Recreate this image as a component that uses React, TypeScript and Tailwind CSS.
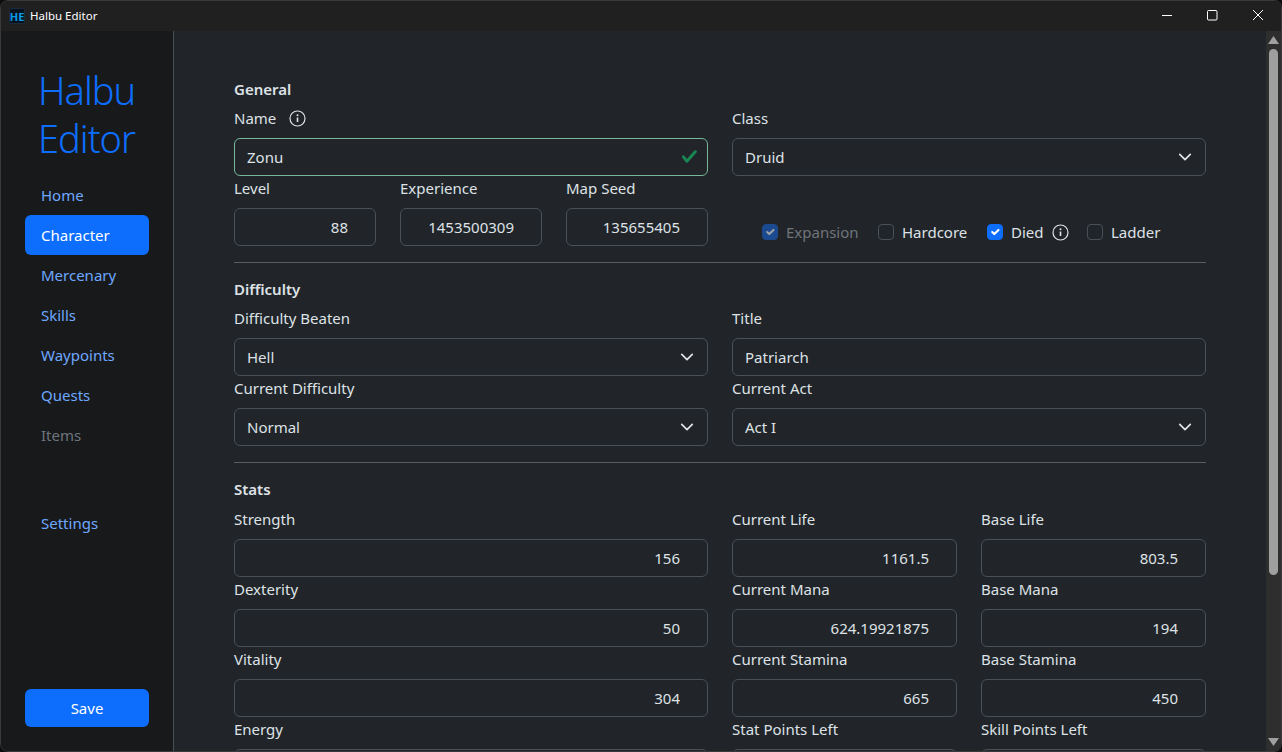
const FONT = "font-['Noto_Sans',sans-serif]";

const navItems = [
  { label: 'Home' },
  { label: 'Character', active: true },
  { label: 'Mercenary' },
  { label: 'Skills' },
  { label: 'Waypoints' },
  { label: 'Quests' },
  { label: 'Items', disabled: true },
];

const statRows = [
  ['Strength', '156', 'Current Life', '1161.5', 'Base Life', '803.5'],
  ['Dexterity', '50', 'Current Mana', '624.19921875', 'Base Mana', '194'],
  ['Vitality', '304', 'Current Stamina', '665', 'Base Stamina', '450'],
  ['Energy', '', 'Stat Points Left', '', 'Skill Points Left', ''],
];

const InfoIcon = () => (
  <svg width="17" height="17" viewBox="0 0 17 17" fill="none" stroke="#dee2e6" className="shrink-0">
    <circle cx="8.5" cy="8.5" r="7.5" strokeWidth="1.2" />
    <path d="M8.5 7.5v4.5" strokeWidth="1.6" />
    <circle cx="8.5" cy="5.2" r="1" fill="#dee2e6" stroke="none" />
  </svg>
);

const Chevron = () => (
  <svg width="14" height="14" viewBox="0 0 16 16" fill="none" stroke="#dee2e6" strokeWidth="2" strokeLinecap="round" strokeLinejoin="round" className="absolute right-[14px] top-[12px] pointer-events-none">
    <path d="m2 5 6 6 6-6" />
  </svg>
);

const Label = ({ children }: { children: React.ReactNode }) => (
  <label className="flex items-center h-6 mb-2 gap-[13px]">{children}</label>
);

const TextField = ({ label, value }: { label: string; value: string }) => (
  <div>
    <Label>{label}</Label>
    <input readOnly value={value} className="w-full h-[38px] px-3 rounded-md border border-[#495057] bg-[#212529] outline-none" />
  </div>
);

const NumberField = ({ label, value }: { label: string; value: string }) => (
  <div>
    <Label>{label}</Label>
    <input readOnly value={value} className="w-full h-[38px] pl-3 pr-[27px] text-right rounded-md border border-[#495057] bg-[#212529] outline-none" />
  </div>
);

const SelectField = ({ label, value }: { label: string; value: string }) => (
  <div>
    <Label>{label}</Label>
    <div className="relative">
      <select value={value} onChange={() => {}} className="appearance-none w-full h-[38px] pl-3 pr-9 rounded-md border border-[#495057] bg-[#212529] outline-none">
        <option>{value}</option>
      </select>
      <Chevron />
    </div>
  </div>
);

const Check = ({ label, checked, disabled, info, width }: { label: string; checked?: boolean; disabled?: boolean; info?: boolean; width: string }) => (
  <div className={`flex items-center gap-2 ${width} ${disabled ? 'text-[#6f7479]' : ''}`}>
    <span className={`flex items-center justify-center w-4 h-4 rounded border ${checked ? (disabled ? 'bg-[#1b4a90] border-[#1b4a90]' : 'bg-[#0d6efd] border-[#0d6efd]') : 'border-[#495057]'}`}>
      {checked && (
        <svg width="16" height="16" viewBox="0 0 20 20" fill="none" stroke={disabled ? '#9aa0a6' : '#fff'} strokeWidth="3" strokeLinecap="round" strokeLinejoin="round">
          <path d="m6 10 3 3 6-6" />
        </svg>
      )}
    </span>
    <span>{label}</span>
    {info && <InfoIcon />}
  </div>
);

const ScrollBar = () => (
  <div className="w-[15px] shrink-0 bg-[#2e2e2e] flex flex-col items-center">
    <svg width="11" height="8" viewBox="0 0 11 8" className="mt-[5px] mr-[1px] shrink-0">
      <path d="M5.5 0 11 8H0z" fill="#a0a0a0" />
    </svg>
    <div className="w-[9px] h-[526px] mt-[5px] mr-[1px] rounded-full bg-[#9f9f9f]" />
    <div className="flex-1" />
    <svg width="11" height="8" viewBox="0 0 11 8" className="mb-[5px] mr-[1px] shrink-0">
      <path d="M5.5 8 11 0H0z" fill="#a0a0a0" />
    </svg>
  </div>
);

export default function App() {
  return (
    <div className={`w-[1282px] h-[752px] overflow-hidden bg-[#0d0d0d] text-[15px] text-[#dee2e6] ${FONT}`}>
      <div className="flex flex-col h-full rounded-lg overflow-hidden border border-[#3a3a3a]">
        <header className="flex items-center h-[30px] shrink-0 bg-[#202020] text-white">
          <div className="flex items-center justify-center w-4 h-4 ml-[8px] rounded-[2px] border border-[#1c2a3a] bg-[#07121f] text-[#0a9be8] text-[11px] font-bold leading-none">HE</div>
          <span className="ml-[5px] text-[11.5px]">Halbu Editor</span>
          <div className="ml-auto flex items-center">
            <svg width="46" height="30" viewBox="0 0 46 30" stroke="#fff" fill="none"><path d="M20 14.5h10" /></svg>
            <svg width="46" height="30" viewBox="0 0 46 30" stroke="#fff" fill="none"><rect x="19.5" y="9.5" width="9.5" height="9.5" rx="1" /></svg>
            <svg width="46" height="30" viewBox="0 0 46 30" stroke="#fff" fill="none" className="mr-[1px]"><path d="m19 9 10 10M29 9 19 19" /></svg>
          </div>
        </header>

        <div className="flex flex-1 min-h-0">
          <aside className="w-[173px] shrink-0 flex flex-col bg-[#18191b] border-r border-[#495057] px-6 pb-6">
            <h1 className="mt-[35px] mb-[13px] px-[13px] text-[38px] tracking-[-1px] leading-[48px] font-light text-[#0d6efd] whitespace-nowrap">
              Halbu<br />Editor
            </h1>
            <nav className="flex flex-col">
              {navItems.map((item) => (
                <a key={item.label} className={`flex items-center h-10 px-4 rounded-md ${item.active ? 'bg-[#0d6efd] text-white' : item.disabled ? 'text-[#6c757d]' : 'text-[#6ea8fe]'}`}>
                  {item.label}
                </a>
              ))}
              <a className="flex items-center h-10 px-4 mt-12 text-[#6ea8fe]">Settings</a>
            </nav>
            <button className="mt-auto h-[38px] rounded-md bg-[#0d6efd] text-white">Save</button>
          </aside>

          <main className="flex-1 min-w-0 overflow-hidden bg-[#212529] px-[60px] pt-[46px]">
            <h5 className="font-semibold h-6 leading-6 mb-[5px]">General</h5>
            <div className="grid grid-cols-2 gap-x-6">
              <div>
                <Label>Name <InfoIcon /></Label>
                <div className="relative">
                  <input readOnly value="Zonu" className="w-full h-[38px] px-3 rounded-md border border-[#75b798] bg-[#212529] outline-none" />
                  <svg width="17" height="17" viewBox="0 0 8 8" className="absolute right-[10px] top-[10px]">
                    <path fill="#198754" d="M2.3 6.73.6 4.53c-.4-1.04.46-1.4 1.1-.8l1.1 1.4 3.4-3.8c.6-.63 1.6-.27 1.2.7l-4 4.6c-.43.5-.8.4-1.1.1z" />
                  </svg>
                </div>
              </div>
              <SelectField label="Class" value="Druid" />
              <div className="grid grid-cols-3 gap-x-6">
                <NumberField label="Level" value="88" />
                <NumberField label="Experience" value="1453500309" />
                <NumberField label="Map Seed" value="135655405" />
              </div>
              <div className="flex items-center pl-[30px] pt-[42px]">
                <Check label="Expansion" checked disabled width="w-[116px]" />
                <Check label="Hardcore" width="w-[109px]" />
                <Check label="Died" checked info width="w-[100px]" />
                <Check label="Ladder" width="w-[90px]" />
              </div>
            </div>
            <hr className="mt-4 mb-[14px] border-[#5a5e63]" />

            <h5 className="font-semibold h-6 leading-6 mb-[5px]">Difficulty</h5>
            <div className="grid grid-cols-2 gap-x-6">
              <SelectField label="Difficulty Beaten" value="Hell" />
              <TextField label="Title" value="Patriarch" />
              <SelectField label="Current Difficulty" value="Normal" />
              <SelectField label="Current Act" value="Act I" />
            </div>
            <hr className="mt-4 mb-[14px] border-[#5a5e63]" />

            <h5 className="font-semibold h-6 leading-6 mb-[6px]">Stats</h5>
            <div className="grid grid-cols-2 gap-x-6">
              {statRows.map((row) => (
                <div key={row[0]} className="contents">
                  <NumberField label={row[0]} value={row[1]} />
                  <div className="grid grid-cols-2 gap-x-6">
                    <NumberField label={row[2]} value={row[3]} />
                    <NumberField label={row[4]} value={row[5]} />
                  </div>
                </div>
              ))}
            </div>
          </main>
          <ScrollBar />
        </div>
      </div>
    </div>
  );
}
